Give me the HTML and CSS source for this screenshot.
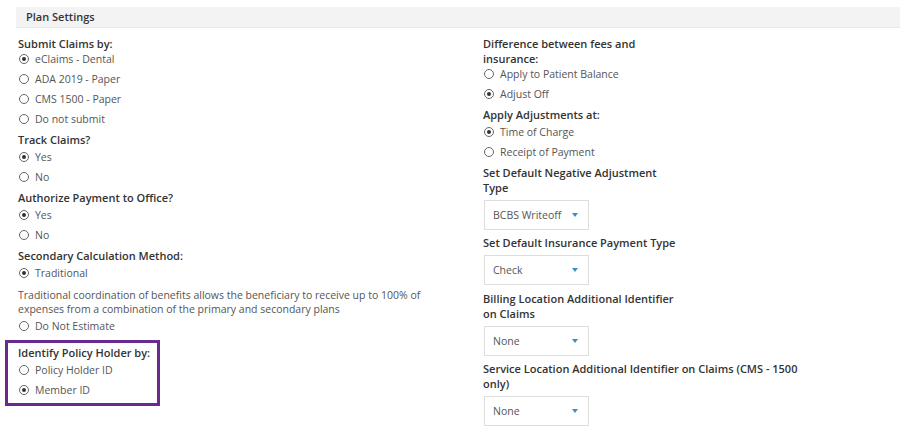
FILE: index.html
```html
<!DOCTYPE html>
<html>
	<head>
		<meta charset="UTF-8">
		<title>Plan Settings</title>
		<link rel="stylesheet" href="styles.css">
	</head>
	<body>
		<div class="page">
			<div class="bar">Plan Settings</div>
			<div class="cols">
				<div class="col left">
					<div class="group first">
						<div class="label">Submit Claims by:</div>
						<div class="radio on"><span class="dot"></span>eClaims - Dental</div>
						<div class="radio"><span class="dot"></span>ADA 2019 - Paper</div>
						<div class="radio"><span class="dot"></span>CMS 1500 - Paper</div>
						<div class="radio"><span class="dot"></span>Do not submit</div>
					</div>
					<div class="group">
						<div class="label">Track Claims?</div>
						<div class="radio on"><span class="dot"></span>Yes</div>
						<div class="radio"><span class="dot"></span>No</div>
					</div>
					<div class="group">
						<div class="label">Authorize Payment to Office?</div>
						<div class="radio on"><span class="dot"></span>Yes</div>
						<div class="radio"><span class="dot"></span>No</div>
					</div>
					<div class="group">
						<div class="label">Secondary Calculation Method:</div>
						<div class="radio on"><span class="dot"></span>Traditional</div>
						<p class="note">Traditional coordination of benefits allows the beneficiary to receive up to 100% of expenses from a combination of the primary and secondary plans</p>
						<div class="radio"><span class="dot"></span>Do Not Estimate</div>
					</div>
					<div class="group boxed">
						<div class="label">Identify Policy Holder by:</div>
						<div class="radio"><span class="dot"></span>Policy Holder ID</div>
						<div class="radio on"><span class="dot"></span>Member ID</div>
					</div>
				</div>
				<div class="col right">
					<div class="group first">
						<div class="label narrow">Difference between fees and insurance:</div>
						<div class="radio"><span class="dot"></span>Apply to Patient Balance</div>
						<div class="radio on"><span class="dot"></span>Adjust Off</div>
					</div>
					<div class="group">
						<div class="label">Apply Adjustments at:</div>
						<div class="radio on"><span class="dot"></span>Time of Charge</div>
						<div class="radio"><span class="dot"></span>Receipt of Payment</div>
					</div>
					<div class="group">
						<div class="label narrow">Set Default Negative Adjustment Type</div>
						<div class="select">BCBS Writeoff<span class="caret"></span></div>
					</div>
					<div class="group sel">
						<div class="label">Set Default Insurance Payment Type</div>
						<div class="select">Check<span class="caret"></span></div>
					</div>
					<div class="group sel more">
						<div class="label narrow">Billing Location Additional Identifier on Claims</div>
						<div class="select">None<span class="caret"></span></div>
					</div>
					<div class="group sel">
						<div class="label wide">Service Location Additional Identifier on Claims (CMS - 1500 only)</div>
						<div class="select">None<span class="caret"></span></div>
					</div>
				</div>
			</div>
		</div>
	</body>
</html>
```
FILE: styles.css
```css
* {
	margin: 0;
	padding: 0;
	box-sizing: border-box;
}

body {
	font-family: "Open Sans", "Liberation Sans", sans-serif;
	font-size: 10.5px;
	color: #555;
	background: #fff;
}

.page {
	padding: 7px 0 0 16px;
}

.bar {
	height: 21px;
	line-height: 20px;
	background: #f3f3f3;
	border-bottom: 1px solid #e8e8e8;
	padding-left: 10px;
	font-weight: 600;
	font-size: 11px;
	color: #333;
}

.cols {
	display: flex;
	padding: 8px 0 0 2px;
}

.left {
	width: 465px;
}

.right {
	width: 400px;
}

.group {
	margin-bottom: 4px;
}

.label {
	font-weight: 600;
	color: #333;
	line-height: 15px;
	font-size: 11px;
	margin-top: -1px;
}

.first .label {
	margin-top: 0;
	margin-bottom: -2px;
}

.label.narrow {
	width: 196px;
}

.label.wide {
	width: 330px;
}

.radio {
	height: 20px;
	line-height: 20px;
	display: flex;
	align-items: center;
	color: #555;
}

.radio .dot {
	width: 10px;
	height: 10px;
	border: 1px solid #666;
	border-radius: 50%;
	margin: 0 6px 0 1px;
	display: flex;
	align-items: center;
	justify-content: center;
}

.radio.on .dot::after {
	content: "";
	width: 4px;
	height: 4px;
	border-radius: 50%;
	background: #333;
}

.note {
	line-height: 14px;
	margin: 5px 0 0;
	width: 440px;
}

.boxed {
	margin: 3px 0 0 -13px;
	width: 155px;
	border: 3px solid #682a8e;
	padding: 2px 0 3px 10px;
}

.boxed .label {
	margin-top: 0;
}

.select {
	width: 105px;
	height: 30px;
	margin: 5px 0 3px 1px;
	border: 1px solid #ddd;
	display: flex;
	align-items: center;
	justify-content: space-between;
	padding: 0 10px 0 8px;
	color: #555;
}

.select .caret {
	width: 0;
	height: 0;
	border-left: 3px solid transparent;
	border-right: 3px solid transparent;
	border-top: 4px solid #3a8fc4;
}

.sel {
	margin-top: 6px;
}

.sel.more {
	margin-top: 7px;
}
```
